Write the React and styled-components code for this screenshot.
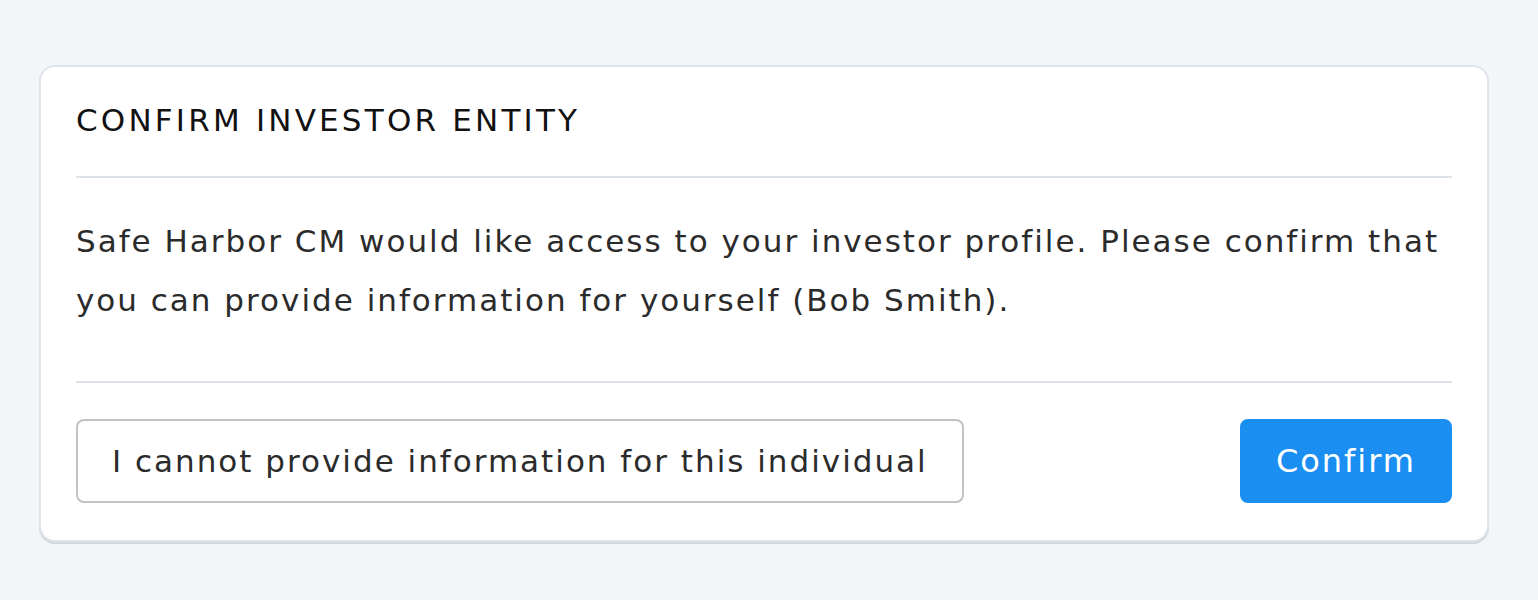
import React from 'react';
import styled, { createGlobalStyle } from 'styled-components';

const GlobalStyle = createGlobalStyle`
  html, body {
    margin: 0;
    padding: 0;
    background: #f3f6f9;
    font-family: "DejaVu Sans", "Noto Sans", sans-serif;
  }
`;

const Page = styled.div`
  padding: 65px 49px 58px 39px;
`;

const Card = styled.section`
  background: #fff;
  border: 2px solid #dfe4eb;
  border-radius: 16px;
  box-shadow: 0 2px 0 #d3d7dd;
  padding: 0 35px;
`;

const Header = styled.header`
  border-bottom: 2px solid #dde2ea;
  padding: 33px 0 36px;
`;

const Title = styled.h2`
  margin: 0;
  color: #111;
  font-weight: 500;
  font-size: 31px;
  letter-spacing: 3.2px;
  line-height: 40px;
`;

const Body = styled.div`
  border-bottom: 2px solid #dde2ea;
  padding: 34px 0 51px;
`;

const Text = styled.p`
  margin: 0;
  color: #2b2b2b;
  font-size: 31px;
  letter-spacing: 2px;
  line-height: 59px;
`;

const Footer = styled.footer`
  display: flex;
  justify-content: space-between;
  align-items: center;
  padding: 36px 0 37px;
`;

const Button = styled.button`
  font-family: inherit;
  font-size: ${(p) => (p.primary ? '32px' : '31px')};
  letter-spacing: ${(p) => (p.primary ? '2px' : '2px')};
  height: 84px;
  padding: 0 34px;
  border-radius: 8px;
  cursor: pointer;
  border: 2px solid ${(p) => (p.primary ? '#1b8ef2' : '#c2c2c2')};
  background: ${(p) => (p.primary ? '#1b8ef2' : '#fff')};
  color: ${(p) => (p.primary ? '#fff' : '#2b2b2b')};
`;

const App = () => (
  <>
    <GlobalStyle />
    <Page>
      <Card>
        <Header>
          <Title>CONFIRM INVESTOR ENTITY</Title>
        </Header>
        <Body>
          <Text>
            Safe Harbor CM would like access to your investor profile. Please confirm that
            you can provide information for yourself (Bob Smith).
          </Text>
        </Body>
        <Footer>
          <Button>I cannot provide information for this individual</Button>
          <Button primary>Confirm</Button>
        </Footer>
      </Card>
    </Page>
  </>
);

export default App;
